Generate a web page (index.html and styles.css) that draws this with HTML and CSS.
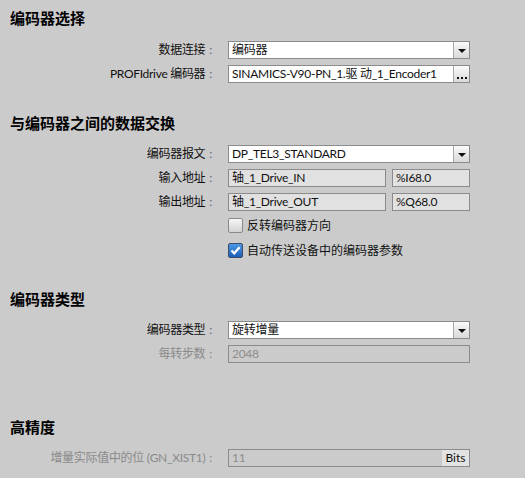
FILE: index.html
```html
<!DOCTYPE html>
<html lang="zh">
<head>
<meta charset="utf-8">
<link rel="stylesheet" href="styles.css">
</head>
<body>
<div class="page">
  <section class="sec s1">
    <h2 class="title">编码器选择</h2>
    <div class="row">
      <div class="label">数据连接<span class="colon">:</span></div>
      <div class="field white full"><span class="val">编码器</span><span class="btn"><span class="tri"></span></span></div>
    </div>
    <div class="row">
      <div class="label">PROFIdrive 编码器<span class="colon">:</span></div>
      <div class="field white full"><span class="val">SINAMICS-V90-PN_1.驱 动_1_Encoder1</span><span class="btn dots"><svg width="14" height="16" viewBox="0 0 14 16"><rect x="2" y="11" width="2" height="2" fill="#111"/><rect x="6" y="11" width="2" height="2" fill="#111"/><rect x="10" y="11" width="2" height="2" fill="#111"/></svg></span></div>
    </div>
  </section>

  <section class="sec s2">
    <h2 class="title">与编码器之间的数据交换</h2>
    <div class="row">
      <div class="label">编码器报文<span class="colon">:</span></div>
      <div class="field white full"><span class="val">DP_TEL3_STANDARD</span><span class="btn"><span class="tri"></span></span></div>
    </div>
    <div class="row">
      <div class="label">输入地址<span class="colon">:</span></div>
      <div class="pair">
        <div class="field ro wide"><span class="val">轴_1_Drive_IN</span></div>
        <div class="field ro narrow"><span class="val">%I68.0</span></div>
      </div>
    </div>
    <div class="row">
      <div class="label">输出地址<span class="colon">:</span></div>
      <div class="pair">
        <div class="field ro wide"><span class="val">轴_1_Drive_OUT</span></div>
        <div class="field ro narrow"><span class="val">%Q68.0</span></div>
      </div>
    </div>
    <div class="cbrow first">
      <span class="cb"></span><span class="cbtext">反转编码器方向</span>
    </div>
    <div class="cbrow">
      <span class="cb checked"><svg width="13" height="13" viewBox="0 0 13 13"><path d="M2.5 6.5 L5.2 9.3 L10.6 3.2" fill="none" stroke="#fff" stroke-width="2.2"/></svg></span><span class="cbtext">自动传送设备中的编码器参数</span>
    </div>
  </section>

  <section class="sec s3">
    <h2 class="title">编码器类型</h2>
    <div class="row">
      <div class="label">编码器类型<span class="colon">:</span></div>
      <div class="field white full"><span class="val">旋转增量</span><span class="btn"><span class="tri"></span></span></div>
    </div>
    <div class="row dis">
      <div class="label">每转步数<span class="colon">:</span></div>
      <div class="field disf full"><span class="val">2048</span></div>
    </div>
  </section>

  <section class="sec s4">
    <h2 class="title">高精度</h2>
    <div class="row dis">
      <div class="label">增量实际值中的位 (GN_XIST1)<span class="colon">:</span></div>
      <div class="field disf full"><span class="val">11</span><span class="unit">Bits</span></div>
    </div>
  </section>
</div>
</body>
</html>
```

FILE: styles.css
```css
html, body {
  margin: 0;
  padding: 0;
  background: #cbcbcb;
}
body {
  font-family: "Lato", "Noto Sans CJK SC", sans-serif;
  font-size: 12px;
  color: #111;
  width: 525px;
  height: 478px;
  overflow: hidden;
}
.page {
  padding-top: 8px;
}
.title {
  margin: 0 0 0 10px;
  height: 20px;
  line-height: 20px;
  font-size: 15px;
  font-weight: bold;
  color: #000;
}
.s1 .title { margin-bottom: 13px; }
.s2 { margin-top: 30px; }
.s2 .title { margin-bottom: 12px; }
.s3 { margin-top: 31px; }
.s3 .title { margin-bottom: 12px; }
.s4 { margin-top: 54px; }
.s4 .title { margin-bottom: 12px; }

.row {
  display: flex;
  align-items: center;
  height: 18px;
}
.row + .row { margin-top: 6px; }
.label {
  width: 212px;
  margin-right: 16px;
  text-align: right;
  white-space: nowrap;
  line-height: 18px;
  letter-spacing: -0.3px;
}
.colon {
  margin-left: 4px;
  color: #5b6b82;
}
.dis .label, .dis .colon { color: #8a8a8a; }

.field {
  box-sizing: border-box;
  height: 18px;
  border: 1px solid #8b8b8b;
  display: flex;
  align-items: stretch;
  line-height: 16px;
  white-space: nowrap;
  overflow: hidden;
}
.full { width: 242px; }
.val {
  flex: 1;
  padding-left: 3px;
  overflow: hidden;
  letter-spacing: -0.28px;
}
.white { background: #fff; }
.ro { background: #e1e1e1; }
.disf { background: #cbcbcb; color: #8e8e8e; }
.pair {
  display: flex;
  gap: 6px;
}
.wide { width: 158px; }
.narrow { width: 78px; }

.btn {
  width: 15px;
  border-left: 1px solid #a8a8a8;
  background: linear-gradient(#fafafa, #d9d9d9);
  display: flex;
  align-items: center;
  justify-content: center;
}
.tri {
  width: 0;
  height: 0;
  border-left: 4px solid transparent;
  border-right: 4px solid transparent;
  border-top: 4px solid #111;
  margin-top: 1px;
}
.dots svg { display: block; }
.unit {
  width: 27px;
  background: #e3e3e3;
  color: #111;
  text-align: center;
}

.cbrow {
  display: flex;
  align-items: center;
  height: 15px;
  padding-left: 228px;
}
.cbrow.first { margin-top: 7px; }
.cbrow + .cbrow { margin-top: 10px; }
.cb {
  box-sizing: border-box;
  width: 15px;
  height: 15px;
  border: 1px solid #8a8a8a;
  border-radius: 2px;
  background: linear-gradient(#f6f6f6, #d2d2d2);
  margin-right: 4px;
  display: flex;
  align-items: center;
  justify-content: center;
}
.cb.checked {
  border-color: #3c4c66;
  background: linear-gradient(#4d98e6, #1c5fb8);
}
.cbtext {
  line-height: 15px;
}
```
